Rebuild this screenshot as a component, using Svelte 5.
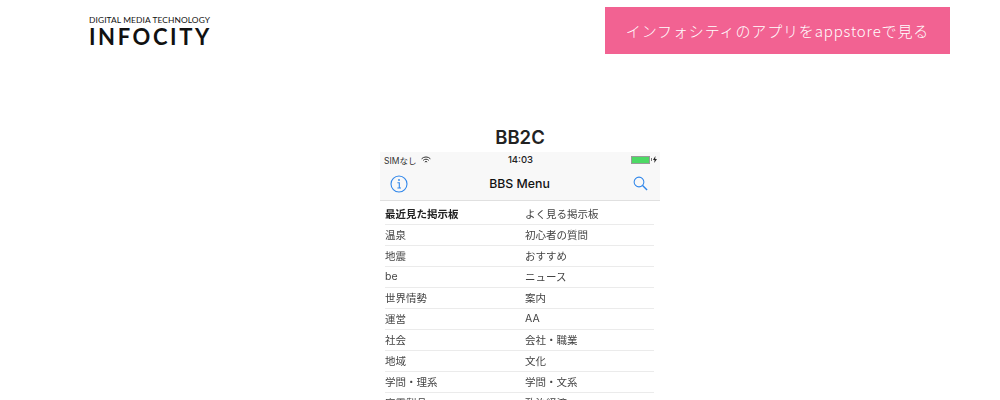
<script>
	const rows = [
		['最近見た掲示板', 'よく見る掲示板'],
		['温泉', '初心者の質問'],
		['地震', 'おすすめ'],
		['be', 'ニュース'],
		['世界情勢', '案内'],
		['運営', 'AA'],
		['社会', '会社・職業'],
		['地域', '文化'],
		['学問・理系', '学問・文系'],
		['家電製品', '政治経済']
	];
</script>

<div class="page">
	<header class="header">
		<div class="logo">
			<div class="tagline">DIGITAL MEDIA TECHNOLOGY</div>
			<div class="brand">INFOCITY</div>
		</div>
		<a class="store" href="#top">インフォシティのアプリをappstoreで見る</a>
	</header>

	<main class="main">
		<h2 class="title">BB2C</h2>
		<div class="phone">
			<div class="top">
				<div class="status">
					<div class="carrier">
						<span>SIMなし</span>
						<svg width="10" height="8" viewBox="0 0 10 8" fill="none" stroke="#333" stroke-width="1">
							<path d="M.6 2.8a6.2 6.2 0 0 1 8.8 0" />
							<path d="M2.2 4.4a3.9 3.9 0 0 1 5.6 0" />
							<path d="M3.8 6a1.7 1.7 0 0 1 2.4 0" />
						</svg>
					</div>
					<div class="time">14:03</div>
					<div class="battery">
						<span class="cell"></span>
						<span class="nub"></span>
						<svg width="4" height="7" viewBox="0 0 4 7"><path d="M2.4 0 0 4h1.6L1.2 7 4 3H2.2z" fill="#222" /></svg>
					</div>
				</div>
				<div class="nav">
					<svg width="18" height="18" viewBox="0 0 18 18" fill="none" stroke="#2f86ea">
						<circle cx="9" cy="9" r="8" stroke-width="1.1" />
						<path d="M7.4 7.7H9.3V13M7.4 13h3.6" stroke-width="1.1" />
						<circle cx="9" cy="5" r=".9" fill="#2f86ea" stroke="none" />
					</svg>
					<span class="nav-title">BBS Menu</span>
					<svg width="15" height="15" viewBox="0 0 16 16" fill="none" stroke="#2f86ea" stroke-width="1.1">
						<circle cx="6.4" cy="6.4" r="5.2" />
						<path d="M10.2 10.2 15 15" stroke-width="1.5" />
					</svg>
				</div>
			</div>
			<div class="list">
				{#each rows as row, i}
					<div class="row" class:first={i === 0}>
						<span class="left">{row[0]}</span>
						<span>{row[1]}</span>
					</div>
				{/each}
			</div>
		</div>
	</main>
</div>

<style>
	:global(body) {
		margin: 0;
		background: #fff;
		overflow: hidden;
	}

	.page {
		height: 400px;
		overflow: hidden;
		font-family: Inter, "Noto Sans CJK JP", sans-serif;
	}

	.header {
		display: flex;
		justify-content: space-between;
		padding: 7px 50px 0 89px;
		height: 47px;
	}

	.logo {
		padding-top: 8px;
		color: #111;
	}

	.tagline {
		font-family: Lato, sans-serif;
		font-size: 8.4px;
		line-height: 11px;
		letter-spacing: 0.1px;
		white-space: nowrap;
	}

	.brand {
		font-family: Lato, sans-serif;
		font-weight: 700;
		font-size: 22px;
		line-height: 22px;
		letter-spacing: 2.6px;
	}

	.store {
		display: flex;
		align-items: center;
		justify-content: center;
		width: 345px;
		height: 47px;
		background: #f26292;
		color: #fff;
		font-family: "Noto Sans CJK JP", sans-serif;
		font-size: 15px;
		font-weight: 300;
		letter-spacing: 0.85px;
		text-decoration: none;
		white-space: nowrap;
	}

	.main {
		display: flex;
		flex-direction: column;
		align-items: center;
		padding-top: 70px;
		padding-left: 40px;
	}

	.title {
		margin: 0 0 2px;
		font-size: 18.5px;
		font-weight: 600;
		line-height: 26px;
		color: #222;
	}

	.phone {
		width: 280px;
		filter: blur(0.4px);
	}

	.top {
		background: #f8f8f8;
		border-bottom: 1px solid #e0e0e0;
		height: 48px;
		color: #111;
	}

	.status {
		display: grid;
		grid-template-columns: 1fr auto 1fr;
		align-items: center;
		height: 15px;
		padding: 0 3px 0 4px;
		font-size: 8.5px;
		color: #333;
	}

	.carrier {
		display: flex;
		align-items: center;
		gap: 5px;
	}

	.time {
		font-size: 9.5px;
		font-weight: 500;
		color: #222;
	}

	.battery {
		display: flex;
		align-items: center;
		justify-content: flex-end;
		gap: 1px;
	}

	.cell {
		width: 17px;
		height: 6px;
		background: #4cd964;
		border: 0.5px solid #999;
	}

	.nub {
		width: 1px;
		height: 3px;
		background: #777;
	}

	.nav {
		display: flex;
		align-items: center;
		justify-content: space-between;
		height: 33px;
		padding: 0 12px 0 10px;
	}

	.nav-title {
		margin-right: 2px;
		font-size: 12.3px;
		font-weight: 500;
		color: #111;
	}

	.list {
		padding: 2px 6px 0 5px;
		font-size: 10.5px;
		color: #444;
	}

	.row {
		display: flex;
		align-items: center;
		height: 20px;
		padding-bottom: 1px;
		margin-bottom: -1px;
		border-bottom: 1px solid #ebebeb;
	}

	.left {
		width: 140px;
	}

	.first .left {
		font-weight: 700;
		color: #222;
	}
</style>
